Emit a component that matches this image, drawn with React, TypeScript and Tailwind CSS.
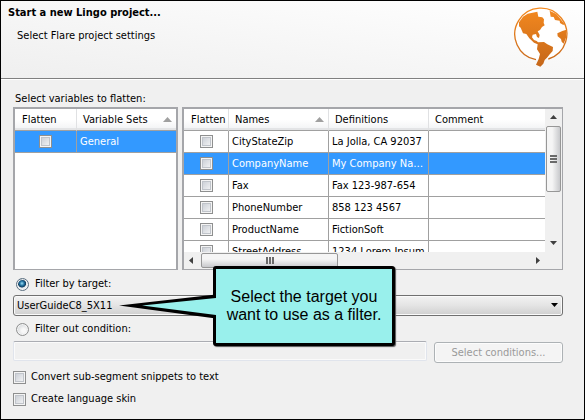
import React, { useState } from 'react';

const box =
  'size-[13px] shrink-0 appearance-none border border-[#8e8f8f] bg-linear-to-br from-[#c3c8d0] to-[#fafafa] shadow-[inset_0_0_0_1px_#f4f4f4,inset_0_0_0_2px_#c0c4ca] checked:from-[#4d6f94] checked:to-[#7ea4c8]';
const radio =
  'size-[13px] shrink-0 appearance-none rounded-full border border-[#8e8f8f] bg-[radial-gradient(circle_at_60%_60%,#f8f8f8_20%,#c4c8cc)] shadow-[inset_0_0_0_1px_#f4f4f4] checked:border-[#5b6f80] checked:bg-[radial-gradient(circle_at_45%_40%,#9be0f6_0,#1d6c9c_26%,#123d5c_42%,#e6eaee_50%)]';
const cell = 'h-[22px] overflow-hidden border-b border-[#a0a0a0] p-0 text-ellipsis whitespace-nowrap';
const head =
  'h-[22px] border-b border-[#a0a0a0] bg-linear-to-b from-white from-50% to-[#f1f2f4] p-0 text-left font-normal whitespace-nowrap shadow-[inset_0_-2px_0_#e3e4e6]';
const split = 'border-r border-r-[#e0e1e3]';
const line = 'border-r border-r-[#a0a0a0]';

const variables = [
  ['CityStateZip', 'La Jolla, CA 92037'],
  ['CompanyName', 'My Company Name'],
  ['Fax', 'Fax 123-987-654'],
  ['PhoneNumber', '858 123 4567'],
  ['ProductName', 'FictionSoft'],
  ['StreetAddress', '1234 Lorem Ipsum'],
];

function SortArrow() {
  return (
    <svg className="mr-1 h-[5px] w-[9px] shrink-0" viewBox="0 0 9 5" aria-hidden="true">
      <path d="M4.5 0 9 5H0z" fill="#a0a0a0" />
    </svg>
  );
}

function Triangle({ d }: { d: string }) {
  return (
    <svg className="size-[7px] shrink-0" viewBox="0 0 7 7" aria-hidden="true">
      <path d={d} fill="#404040" />
    </svg>
  );
}

function Globe() {
  return (
    <svg className="h-[61px] w-[55px] shrink-0" viewBox="88 22 165 183" role="img" aria-label="Globe">
      <defs>
        <linearGradient id="globe" x1="0" y1="22" x2="0" y2="204" gradientUnits="userSpaceOnUse">
          <stop offset="0" stopColor="#f58a1f" />
          <stop offset="1" stopColor="#c4661a" />
        </linearGradient>
      </defs>
      <circle cx="170" cy="103" r="78" fill="#fff" />
      <path d="M157 180A78 78 0 1 1 194 178" fill="none" stroke="url(#globe)" strokeWidth="4" />
      <g fill="url(#globe)">
        <path d="M106 68 118 51 132 42 161 36 164 51 176 53 181 59 180 70 183 77 175 82 169 91 162 95 168 106 166 115 160 112 157 103 147 105 145 113 151 121 159 124 163 128 181 127 191 134 208 142 207 154 197 165 190 174 183 181 179 192 170 201 157 195 165 178 169 163 160 149 162 134 151 129 137 116 128 103 118 101 111 84 106 80z" />
        <path d="M198 33 218 43 230 57 242 73 239 76 229 70 228 63 214 61 210 52 201 51z" />
        <path d="M248 90 236 94 221 101 222 110 232 118 234 126 240 132 247 114z" />
      </g>
    </svg>
  );
}

export default function App() {
  const [mode, setMode] = useState('target');
  return (
    <main className="flex min-h-screen w-full flex-col border border-black bg-[#f0f0f0] font-['DejaVu_Sans_Condensed','DejaVu_Sans',sans-serif] text-[11px] leading-4 text-black">
      <header className="flex h-[78px] justify-between border-b border-[#808080] bg-linear-to-tr from-[#efefef] to-white pt-1 pr-4 pl-[7px] shadow-[0_1px_0_#fff]">
        <div>
          <h1 className="font-bold">Start a new Lingo project...</h1>
          <p className="mt-[7px] pl-[9px]">Select Flare project settings</p>
        </div>
        <div className="pt-[2px]">
          <Globe />
        </div>
      </header>

      <form className="flex flex-col pt-3 pr-[21px] pl-3">
        <h2 className="h-4 pl-[2px]">Select variables to flatten:</h2>
        <div className="flex h-[163px] gap-1">
          <div className="w-[165px] shrink-0 overflow-hidden border-2 border-b border-[#a5a6aa] bg-white">
            <table className="w-full table-fixed border-separate border-spacing-0">
              <colgroup>
                <col className="w-[62px]" />
                <col />
              </colgroup>
              <thead>
                <tr>
                  <th className={`${head} ${split} pl-[7px]`}>Flatten</th>
                  <th className={`${head} pl-[6px]`}>
                    <div className="flex items-center justify-between">Variable Sets<SortArrow /></div>
                  </th>
                </tr>
              </thead>
              <tbody>
                <tr className="bg-[#3399ff] text-white">
                  <td className={`${cell} ${line}`}>
                    <input type="checkbox" aria-label="Flatten General" className={`${box} mx-auto block`} />
                  </td>
                  <td className={`${cell} pl-[3px]`}>General</td>
                </tr>
              </tbody>
            </table>
          </div>

          <div className="flex min-w-0 grow flex-col border border-t-2 border-l-2 border-[#a5a6aa] bg-[#f0f0f0]">
            <div className="flex h-[143px]">
              <div className="min-w-0 grow overflow-hidden bg-white">
                <table className="w-full table-fixed border-separate border-spacing-0">
                  <colgroup>
                    <col className="w-[45px]" />
                    <col className="w-[100px]" />
                    <col className="w-[100px]" />
                    <col />
                  </colgroup>
                  <thead>
                    <tr>
                      <th className={`${head} ${split} pl-[7px]`}>Flatten</th>
                      <th className={`${head} ${split} pl-[6px]`}>
                        <div className="flex items-center justify-between">Names<SortArrow /></div>
                      </th>
                      <th className={`${head} ${split} pl-[6px]`}>Definitions</th>
                      <th className={`${head} pl-[6px]`}>Comment</th>
                    </tr>
                  </thead>
                  <tbody>
                    {variables.map(([name, value], i) => (
                      <tr key={name} className={i === 1 ? 'bg-[#3399ff] text-white' : ''}>
                        <td className={`${cell} ${line}`}>
                          <input type="checkbox" aria-label={`Flatten ${name}`} className={`${box} mx-auto block`} />
                        </td>
                        <td className={`${cell} ${line} pl-[3px]`}>{name}</td>
                        <td className={`${cell} ${line} pl-[3px]`}>{value}</td>
                        <td className={cell} />
                      </tr>
                    ))}
                  </tbody>
                </table>
              </div>
              <div className="flex w-[17px] shrink-0 flex-col items-center bg-[#f0f0f0] py-[5px]">
                <Triangle d="M3.5 1 7 5H0z" />
                <div className="mt-[5px] flex h-[66px] w-[15px] flex-col items-center justify-center gap-px rounded-[2px] border border-[#979797] bg-linear-to-r from-[#f5f5f5] from-40% to-[#c8c9cc]">
                  <i className="h-[2px] w-[7px] bg-[#6a6a6a]" />
                  <i className="h-[2px] w-[7px] bg-[#6a6a6a]" />
                  <i className="h-[2px] w-[7px] bg-[#6a6a6a]" />
                </div>
                <div className="mt-auto flex"><Triangle d="M3.5 5 7 1H0z" /></div>
              </div>
            </div>
            <div className="mr-[17px] flex h-[17px] items-center px-1">
              <Triangle d="M1 3.5 5 0V7z" />
              <div className="ml-[6px] flex h-[15px] w-[137px] items-center justify-center gap-px rounded-[2px] border border-[#979797] bg-linear-to-b from-[#f5f5f5] from-40% to-[#c8c9cc]">
                <i className="h-[7px] w-[2px] bg-[#6a6a6a]" />
                <i className="h-[7px] w-[2px] bg-[#6a6a6a]" />
                <i className="h-[7px] w-[2px] bg-[#6a6a6a]" />
              </div>
              <div className="ml-auto flex"><Triangle d="M6 3.5 2 0V7z" /></div>
            </div>
          </div>
        </div>

        <label className="mt-[6px] flex h-4 w-fit items-center gap-[6px] pl-[3px]">
          <input type="radio" name="mode" className={radio} checked={mode === 'target'} onChange={() => setMode('target')} />
          Filter by target:
        </label>
        <div className="relative mt-[3px]">
          <select
            aria-label="Target"
            className="block h-[21px] w-full appearance-none rounded-[3px] border border-[#707070] bg-linear-to-b from-[#f2f2f2] via-[#e4e4e4] via-50% to-[#cfcfcf] pl-[3px] shadow-[inset_0_0_0_1px_#fafafa]"
          >
            <option>UserGuideC8_5X11</option>
          </select>
          <svg className="pointer-events-none absolute top-2 right-[5px] h-[4px] w-[7px]" viewBox="0 0 7 4" aria-hidden="true">
            <path d="M0 0H7L3.5 4z" />
          </svg>
          <div className="pointer-events-none absolute -top-[29px] left-[200px] flex h-[80px] w-[182px] items-center justify-center rounded-[3px] border-3 border-black bg-[#99f0ec] text-center font-['Liberation_Sans',Arial,sans-serif] text-[16px] leading-[18px] shadow-[1px_1px_1px_#555]">
            <p>Select the target you<br />want to use as a filter.</p>
            <svg className="absolute top-[24px] -left-[98px] h-[28px] w-[99px]" viewBox="0 0 99 28" aria-hidden="true">
              <path d="M99 3.5 19 12.500 99 23.500z" fill="#99f0ec" />
              <path d="M98 1.500 1 12.500 98 25.500V22L24 12.500 98 5z" />
            </svg>
          </div>
        </div>

        <label className="mt-[5px] flex h-4 w-fit items-center gap-[6px] pl-[3px]">
          <input type="radio" name="mode" className={radio} checked={mode === 'condition'} onChange={() => setMode('condition')} />
          Filter out condition:
        </label>
        <div className="mt-1 flex gap-[7px]">
          <input
            type="text"
            aria-label="Condition"
            disabled
            className="h-[20px] min-w-0 grow rounded-[2px] border border-[#e0e4ec] border-t-[#abadb3] bg-[#f0f0f0] shadow-[inset_0_0_0_1px_#fafafa]"
          />
          <button
            type="button"
            disabled
            className="mt-px h-[21px] w-[129px] shrink-0 rounded-[3px] border border-[#adb2b5] bg-[#f4f4f4] text-[#9a9a9a] shadow-[inset_0_0_0_1px_#fcfcfc]"
          >
            Select conditions...
          </button>
        </div>

        <label className="mt-[6px] flex h-4 w-fit items-center gap-[5px]">
          <input type="checkbox" className={box} />
          Convert sub-segment snippets to text
        </label>
        <label className="mt-[6px] flex h-4 w-fit items-center gap-[5px]">
          <input type="checkbox" className={box} />
          Create language skin
        </label>
      </form>
    </main>
  );
}
